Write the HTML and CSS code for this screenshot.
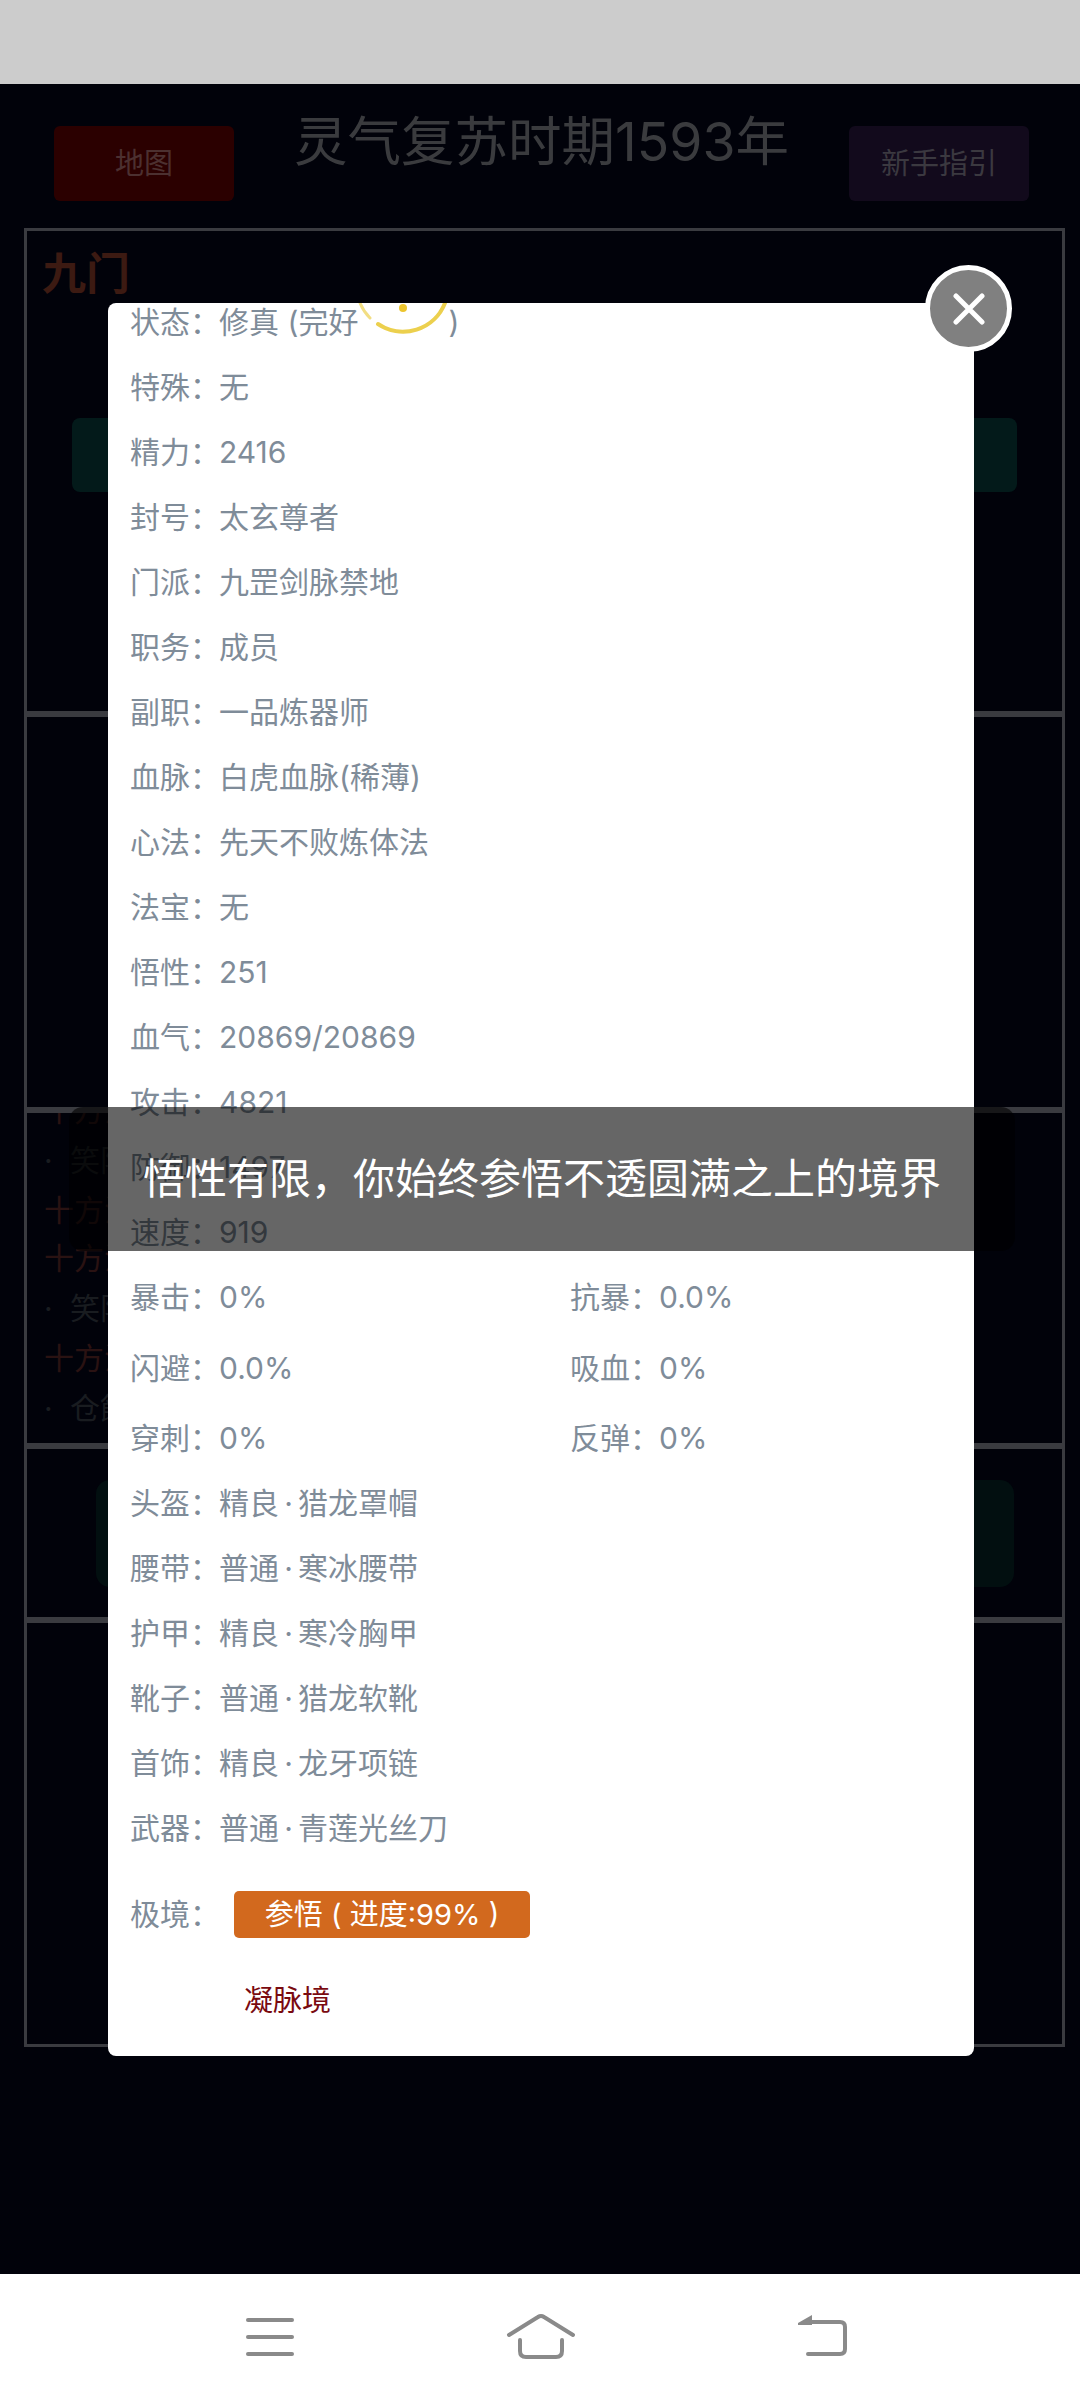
FILE: index.html
```html
<!DOCTYPE html>
<html lang="zh-CN">
<head>
    <meta charset="UTF-8">
    <meta name="viewport" content="width=device-width, initial-scale=1.0">
    <title>灵气复苏时期</title>
    <link rel="stylesheet" href="styles.css">
</head>
<body>
    <div class="status-bar"></div>

    <div class="main">
        <div class="top-row">
            <div class="top-btn map-btn">地图</div>
            <div class="page-title">灵气复苏时期1593年</div>
            <div class="top-btn guide-btn">新手指引</div>
        </div>

        <div class="panel panel-sect">
            <div class="sect-name">九门</div>
            <div class="sect-btn"></div>
        </div>
        <div class="panel panel-empty"></div>
        <div class="panel panel-log">
            <div class="log-list">
                <div class="log-head">十方法</div>
                <div class="log-item"><i>·</i>笑阳</div>
                <div class="log-head">十方法</div>
                <div class="log-head">十方法</div>
                <div class="log-item"><i>·</i>笑阳</div>
                <div class="log-head">十方法</div>
                <div class="log-item"><i>·</i>仓館</div>
            </div>
        </div>
        <div class="panel panel-action">
            <div class="action-btn"></div>
        </div>
        <div class="panel panel-last"></div>

        <!-- character sheet popup -->
        <div class="modal">
            <div class="sheet">
                <div class="row"><span class="key">状态&#xFF1A;</span>修真 (完好<svg class="sun" viewBox="0 0 90 30"><g fill="none" stroke="#ecd04e" stroke-width="4" stroke-linecap="round"><path d="M20 15A45 45 0 0 0 87 -6"/><path d="M2 -6A45 45 0 0 0 12 9" stroke-width="3" opacity=".7"/></g><circle cx="45" cy="-1" r="4" fill="#ecc52e"/></svg>)</div>
                <div class="row"><span class="key">特殊&#xFF1A;</span>无</div>
                <div class="row"><span class="key">精力&#xFF1A;</span>2416</div>
                <div class="row"><span class="key">封号&#xFF1A;</span>太玄尊者</div>
                <div class="row"><span class="key">门派&#xFF1A;</span>九罡剑脉禁地</div>
                <div class="row"><span class="key">职务&#xFF1A;</span>成员</div>
                <div class="row"><span class="key">副职&#xFF1A;</span>一品炼器师</div>
                <div class="row"><span class="key">血脉&#xFF1A;</span>白虎血脉(稀薄)</div>
                <div class="row"><span class="key">心法&#xFF1A;</span>先天不败炼体法</div>
                <div class="row"><span class="key">法宝&#xFF1A;</span>无</div>
                <div class="row"><span class="key">悟性&#xFF1A;</span>251</div>
                <div class="row"><span class="key">血气&#xFF1A;</span>20869/20869</div>
                <div class="row"><span class="key">攻击&#xFF1A;</span>4821</div>
                <div class="row"><span class="key">防御&#xFF1A;</span>1497</div>
                <div class="row"><span class="key">速度&#xFF1A;</span>919</div>

                <div class="row-grid">
                    <div class="row"><span class="key">暴击&#xFF1A;</span>0%</div>
                    <div class="row"><span class="key">抗暴&#xFF1A;</span>0.0%</div>
                    <div class="row"><span class="key">闪避&#xFF1A;</span>0.0%</div>
                    <div class="row"><span class="key">吸血&#xFF1A;</span>0%</div>
                    <div class="row"><span class="key">穿刺&#xFF1A;</span>0%</div>
                    <div class="row"><span class="key">反弹&#xFF1A;</span>0%</div>
                </div>

                <div class="row"><span class="key">头盔&#xFF1A;</span>精良<span class="dot">·</span>猎龙罩帽</div>
                <div class="row"><span class="key">腰带&#xFF1A;</span>普通<span class="dot">·</span>寒冰腰带</div>
                <div class="row"><span class="key">护甲&#xFF1A;</span>精良<span class="dot">·</span>寒冷胸甲</div>
                <div class="row"><span class="key">靴子&#xFF1A;</span>普通<span class="dot">·</span>猎龙软靴</div>
                <div class="row"><span class="key">首饰&#xFF1A;</span>精良<span class="dot">·</span>龙牙项链</div>
                <div class="row"><span class="key">武器&#xFF1A;</span>普通<span class="dot">·</span>青莲光丝刀</div>

                <div class="row-realm">
                    <span class="key">极境&#xFF1A;</span>
                    <div class="realm-btn">参悟 ( 进度:99% )</div>
                </div>
                <div class="realm-name">凝脉境</div>
            </div>
        </div>

        <div class="close-btn">
            <svg viewBox="0 0 32 32" width="32" height="32"><path d="M3 3L29 29M29 3L3 29" stroke="#fff" stroke-width="5" stroke-linecap="round"/></svg>
        </div>

        <div class="toast">悟性有限&#xFF0C;你始终参悟不透圆满之上的境界</div>
    </div>

    <div class="nav-bar">
        <svg width="50" height="60" viewBox="0 0 50 60"><g stroke="#8a8a8a" stroke-width="4" stroke-linecap="round"><path d="M3 15H47"/><path d="M3 32H47"/><path d="M3 49H47"/></g></svg>
        <svg width="70" height="60" viewBox="0 0 70 60"><g fill="none" stroke="#8a8a8a" stroke-width="4" stroke-linecap="round" stroke-linejoin="round"><path d="M3 30L32 12Q35 10 38 12L67 30"/><path d="M14 35V46Q14 52 20 52H50Q56 52 56 46V35"/></g></svg>
        <svg width="60" height="60" viewBox="0 0 60 60"><path d="M11 18L25 10V20H11Z" fill="#8a8a8a"/><path d="M24 17H53Q58 17 58 22V44Q58 49 53 49H21" fill="none" stroke="#8a8a8a" stroke-width="4" stroke-linecap="round"/></svg>
    </div>
</body>
</html>
```

FILE: styles.css
```css
/* Dimmed game page with the character popup on top */
body {
    display: flex;
    flex-direction: column;
    width: 1080px;
    height: 2400px;
    margin: 0;
    overflow: hidden;
    font-family: Inter, "Noto Sans CJK SC", sans-serif;
    background-color: #01020a;
}

.status-bar {
    height: 84px;
    background-color: #cccccc;
}

.main {
    position: relative;
    flex: 1;
    background-color: #01020a;
}

.top-row {
    display: flex;
    justify-content: space-between;
    align-items: flex-start;
    height: 144px;
    padding: 0 51px 0 54px;
}

.top-btn {
    width: 180px;
    height: 75px;
    margin-top: 42px;
    border-radius: 6px;
    font-size: 29px;
    line-height: 75px;
    text-align: center;
}

.map-btn {
    color: #4c3030;
    background-color: #2b0000;
}

.guide-btn {
    color: #3b3940;
    background-color: #120a1c;
}

.page-title {
    margin-top: 23px;
    font-size: 53.5px;
    line-height: 70px;
    color: #3a3b3e;
}

.panel {
    box-sizing: border-box;
    width: 1041px;
    margin-left: 24px;
    border: 3px solid #3a3b40;
    overflow: hidden;
}

.panel-sect {
    height: 486px;
    padding: 18px 0 0 15px;
}

.sect-name {
    font-size: 44px;
    font-weight: bold;
    line-height: 50px;
    color: #3c1a12;
}

.sect-btn {
    width: 945px;
    height: 74px;
    margin: 119px 0 0 30px;
    border-radius: 8px;
    background-color: #031a1a;
}

.panel-empty {
    height: 396px;
}

.panel-log {
    height: 336px;
}

.log-list {
    margin-top: -27px;
    padding-left: 17px;
    font-size: 30px;
}

.log-head {
    height: 48px;
    line-height: 48px;
    color: #2a1212;
}

.log-item {
    height: 52px;
    line-height: 52px;
    color: #191c20;
}

.log-item i {
    display: inline-block;
    width: 26px;
    font-style: normal;
}

.panel-action {
    height: 174px;
    padding: 31px 0 0 69px;
}

.action-btn {
    width: 918px;
    height: 107px;
    border-radius: 14px;
    background-color: #020f10;
}

.panel-last {
    height: 427px;
}

.modal {
    position: absolute;
    top: 219px;
    left: 108px;
    width: 866px;
    height: 1753px;
    border-radius: 8px;
    overflow: hidden;
    background-color: #ffffff;
}

.sheet {
    margin-top: -13px;
    padding-left: 22px;
    font-size: 30px;
    color: #7f8c99;
}

.row {
    height: 65px;
    line-height: 65px;
    white-space: nowrap;
}

.key {
    display: inline-block;
    width: 89px;
}

.sun {
    width: 90px;
    height: 30px;
    overflow: visible;
    vertical-align: -6px;
}

.dot {
    display: inline-block;
    width: 19px;
    text-align: center;
}

.row-grid {
    display: grid;
    grid-template-columns: 440px 1fr;
    row-gap: 5.5px;
}

.row-realm {
    display: flex;
    height: 47px;
    margin-top: 30px;
    line-height: 47px;
}

.row-realm .key {
    width: 104px;
}

.realm-btn {
    width: 296px;
    height: 47px;
    border-radius: 5px;
    font-size: 29px;
    text-align: center;
    color: #ffffff;
    background-color: #d2691e;
}

.realm-name {
    margin: 41px 0 0 114px;
    font-size: 29px;
    line-height: 44px;
    color: #7a0a10;
}

.close-btn {
    position: absolute;
    top: 181px;
    left: 925px;
    display: flex;
    align-items: center;
    justify-content: center;
    box-sizing: border-box;
    width: 87px;
    height: 87px;
    border: 5px solid #ffffff;
    border-radius: 50%;
    background-color: #808080;
}

.toast {
    position: absolute;
    top: 1023px;
    left: 69px;
    width: 946px;
    height: 144px;
    border-radius: 14px;
    font-size: 42px;
    line-height: 144px;
    text-align: center;
    color: #ffffff;
    background-color: rgba(0, 0, 0, 0.6);
}

.nav-bar {
    display: flex;
    gap: 211px;
    box-sizing: border-box;
    height: 126px;
    padding: 31px 0 0 245px;
    background-color: #ffffff;
}
```
